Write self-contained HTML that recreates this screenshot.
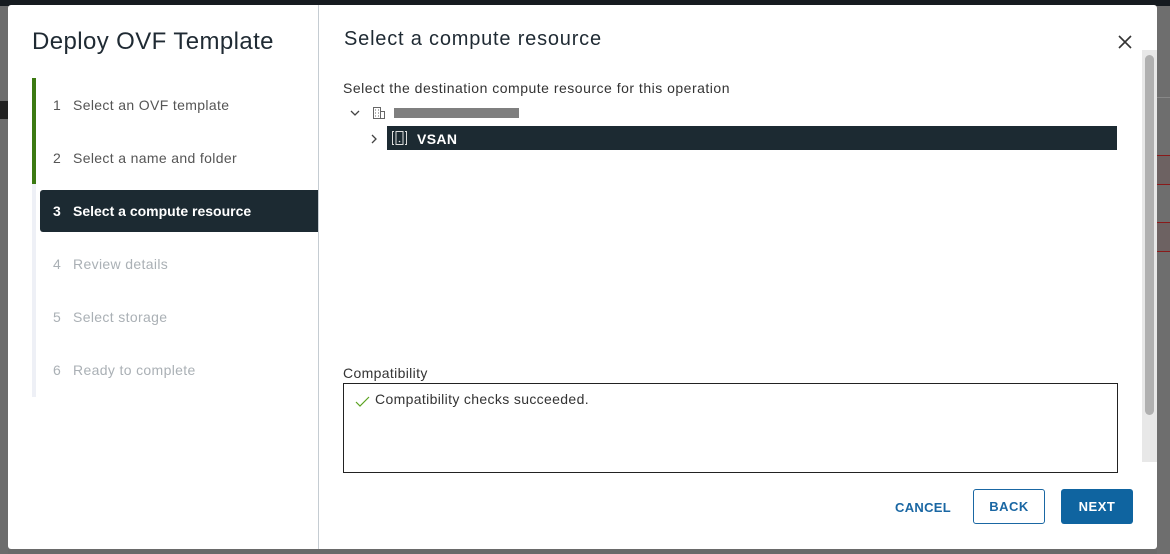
<!DOCTYPE html>
<html><head><style>
*{margin:0;padding:0;box-sizing:border-box}
body{width:1170px;height:554px;overflow:hidden;background:#6a6a6a;font-family:"Liberation Sans",sans-serif;position:relative}
.top{position:absolute;left:0;top:0;width:1170px;height:6px;background:#161b20}
.bgl{position:absolute;left:0;top:6px;width:8px;height:548px;background:#6c6c6c}
.modal{position:absolute;left:8px;top:5px;width:1149px;height:544px;background:#fff;border-radius:3px}
.t{position:absolute;white-space:nowrap;letter-spacing:0.35px}
</style></head><body>
<div class="top"></div>
<div class="bgl">
<div style="position:absolute;top:95px;width:8px;height:18px;background:#222"></div>
</div>
<div style="position:absolute;left:1157px;top:6px;width:13px;height:548px;background:#6e6e6e"></div>
<div style="position:absolute;left:1157px;top:97px;width:13px;height:1px;background:#888"></div>
<div style="position:absolute;left:1157px;top:155px;width:13px;height:30px;background:#6d6262;border-top:1px solid #8a1a1a;border-bottom:1px solid #8a1a1a"></div>
<div style="position:absolute;left:1157px;top:222px;width:13px;height:30px;background:#6d6262;border-top:1px solid #8a1a1a;border-bottom:1px solid #8a1a1a"></div>
<div class="modal">
  <div class="t" style="left:24px;top:23px;font-size:24px;color:#1f2a33;letter-spacing:0.4px">Deploy OVF Template</div>
  <div style="position:absolute;left:24px;top:73px;width:4px;height:319px;background:#eef0f6"></div>
  <div style="position:absolute;left:24px;top:73px;width:4px;height:106px;background:#3c7a12"></div>
  <div class="t" style="left:45px;top:92px;font-size:14px;color:#555"><span style="display:inline-block;width:20px">1</span>Select an OVF template</div>
  <div class="t" style="left:45px;top:145px;font-size:14px;color:#555"><span style="display:inline-block;width:20px">2</span>Select a name and folder</div>
  <div style="position:absolute;left:32px;top:185px;width:278px;height:42px;background:#1c2a32;border-radius:3px 0 0 3px"></div>
  <div class="t" style="left:45px;top:198px;font-size:14px;color:#fff;font-weight:bold;letter-spacing:0"><span style="display:inline-block;width:20px">3</span>Select a compute resource</div>
  <div class="t" style="left:45px;top:251px;font-size:14px;color:#aab0b5"><span style="display:inline-block;width:20px">4</span>Review details</div>
  <div class="t" style="left:45px;top:304px;font-size:14px;color:#aab0b5"><span style="display:inline-block;width:20px">5</span>Select storage</div>
  <div class="t" style="left:45px;top:357px;font-size:14px;color:#aab0b5"><span style="display:inline-block;width:20px">6</span>Ready to complete</div>
  <div style="position:absolute;left:310px;top:0;width:1px;height:544px;background:#c5ccd2"></div>

  <div class="t" style="left:336px;top:23px;font-size:20px;color:#1f2a33;letter-spacing:0.8px">Select a compute resource</div>
  <svg style="position:absolute;left:1110px;top:30px" width="14" height="14" viewBox="0 0 14 14"><path d="M1 1L13 13M13 1L1 13" stroke="#333" stroke-width="1.6"/></svg>
  <div class="t" style="left:335px;top:75px;font-size:14px;color:#333;letter-spacing:0.5px">Select the destination compute resource for this operation</div>
  <svg style="position:absolute;left:342px;top:104px" width="10" height="8" viewBox="0 0 10 8"><path d="M1 2L5 6L9 2" stroke="#444" fill="none" stroke-width="1.3"/></svg>
  <svg style="position:absolute;left:364px;top:101px" width="14" height="14" viewBox="0 0 14 14"><rect x="1.5" y="1.5" width="7" height="11" fill="none" stroke="#666"/><rect x="8.5" y="5.5" width="4" height="7" fill="none" stroke="#666"/><path d="M3 4h1M6 4h1M3 7h1M6 7h1M3 10h1M6 10h1" stroke="#666"/></svg>
  <div style="position:absolute;left:386px;top:103px;width:125px;height:10px;background:#7f7f7f"></div>
  <svg style="position:absolute;left:362px;top:129px" width="8" height="10" viewBox="0 0 8 10"><path d="M2 1L6 5L2 9" stroke="#444" fill="none" stroke-width="1.3"/></svg>
  <div style="position:absolute;left:379px;top:121px;width:730px;height:24px;background:#1c2a32"></div>
  <svg style="position:absolute;left:383px;top:125px" width="17" height="16" viewBox="0 0 17 16"><path d="M3 1.5H1.5V14.5H3M14 1.5H15.5V14.5H14" stroke="#ddd" fill="none"/><rect x="5" y="1.5" width="7" height="13" fill="none" stroke="#ddd"/><circle cx="8.5" cy="11.5" r="0.8" fill="#ddd"/></svg>
  <div class="t" style="left:409px;top:126px;font-size:14px;color:#fff;font-weight:bold">VSAN</div>

  <div class="t" style="left:335px;top:360px;font-size:14px;color:#333">Compatibility</div>
  <div style="position:absolute;left:335px;top:378px;width:775px;height:90px;border:1px solid #222"></div>
  <svg style="position:absolute;left:347px;top:391px" width="15" height="12" viewBox="0 0 15 12"><path d="M1 6L5 10L14 1" stroke="#5aa220" fill="none" stroke-width="1.2"/></svg>
  <div class="t" style="left:367px;top:386px;font-size:14px;color:#333">Compatibility checks succeeded.</div>

  <div style="position:absolute;left:1134px;top:45px;width:15px;height:412px;background:#e8e8e8"></div>
  <div style="position:absolute;left:1137px;top:50px;width:9px;height:360px;background:#b0b0b0;border-radius:5px"></div>

  <div class="t" style="left:887px;top:495px;font-size:13px;color:#1a67a3;font-weight:bold;letter-spacing:0.3px">CANCEL</div>
  <div style="position:absolute;left:965px;top:484px;width:72px;height:35px;border:1px solid #1a67a3;border-radius:3px;color:#1a67a3;font-size:13px;font-weight:bold;text-align:center;line-height:33px;letter-spacing:0.5px">BACK</div>
  <div style="position:absolute;left:1053px;top:484px;width:72px;height:35px;background:#0f64a0;border-radius:3px;color:#fff;font-size:13px;font-weight:bold;text-align:center;line-height:35px;letter-spacing:0.5px">NEXT</div>
</div>
</body></html>
